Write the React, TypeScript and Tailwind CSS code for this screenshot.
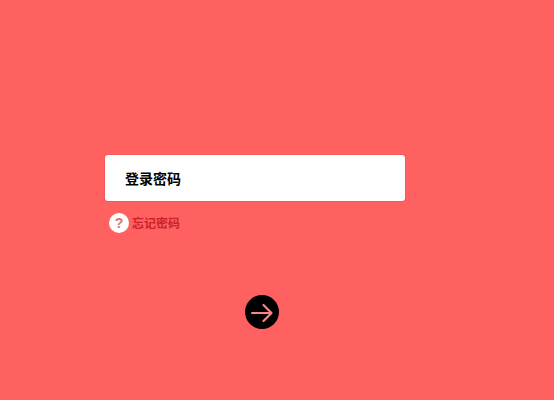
export default function App() {
  return (
    <div className="h-[400px] w-[554px] overflow-hidden bg-[#ff6060] pl-[105px] pt-[155px] font-['Liberation_Sans','Noto_Sans_CJK_SC',sans-serif]">
      <div className="flex h-[46px] w-[300px] items-center rounded-[3px] bg-white pl-[20px] pt-[2px] text-[14px] font-bold leading-none text-black shadow-[0_0_0_1px_rgba(220,80,80,0.35)]">
        登录密码
      </div>
      <div className="mt-[11px] flex h-[22px] items-center pl-[4px]">
        <div className="flex h-[20px] w-[20px] items-center justify-center rounded-full bg-white text-[14px] font-bold leading-none text-[#d87272]">?</div>
        <span className="ml-[3px] pt-[2px] text-[12px] font-bold leading-none text-[#cc2228]">忘记密码</span>
      </div>
      <div className="ml-[140px] mt-[61px] flex h-[34px] w-[34px] items-center justify-center rounded-full bg-black">
        <svg width="24" height="24" viewBox="0 0 24 24" fill="none" stroke="#ff8484" strokeWidth="2.2" strokeLinecap="round" strokeLinejoin="round" className="mt-[1px]">
          <path d="M2 12h19" />
          <path d="M13.500 4l8 8-8 8" />
        </svg>
      </div>
    </div>
  );
}
